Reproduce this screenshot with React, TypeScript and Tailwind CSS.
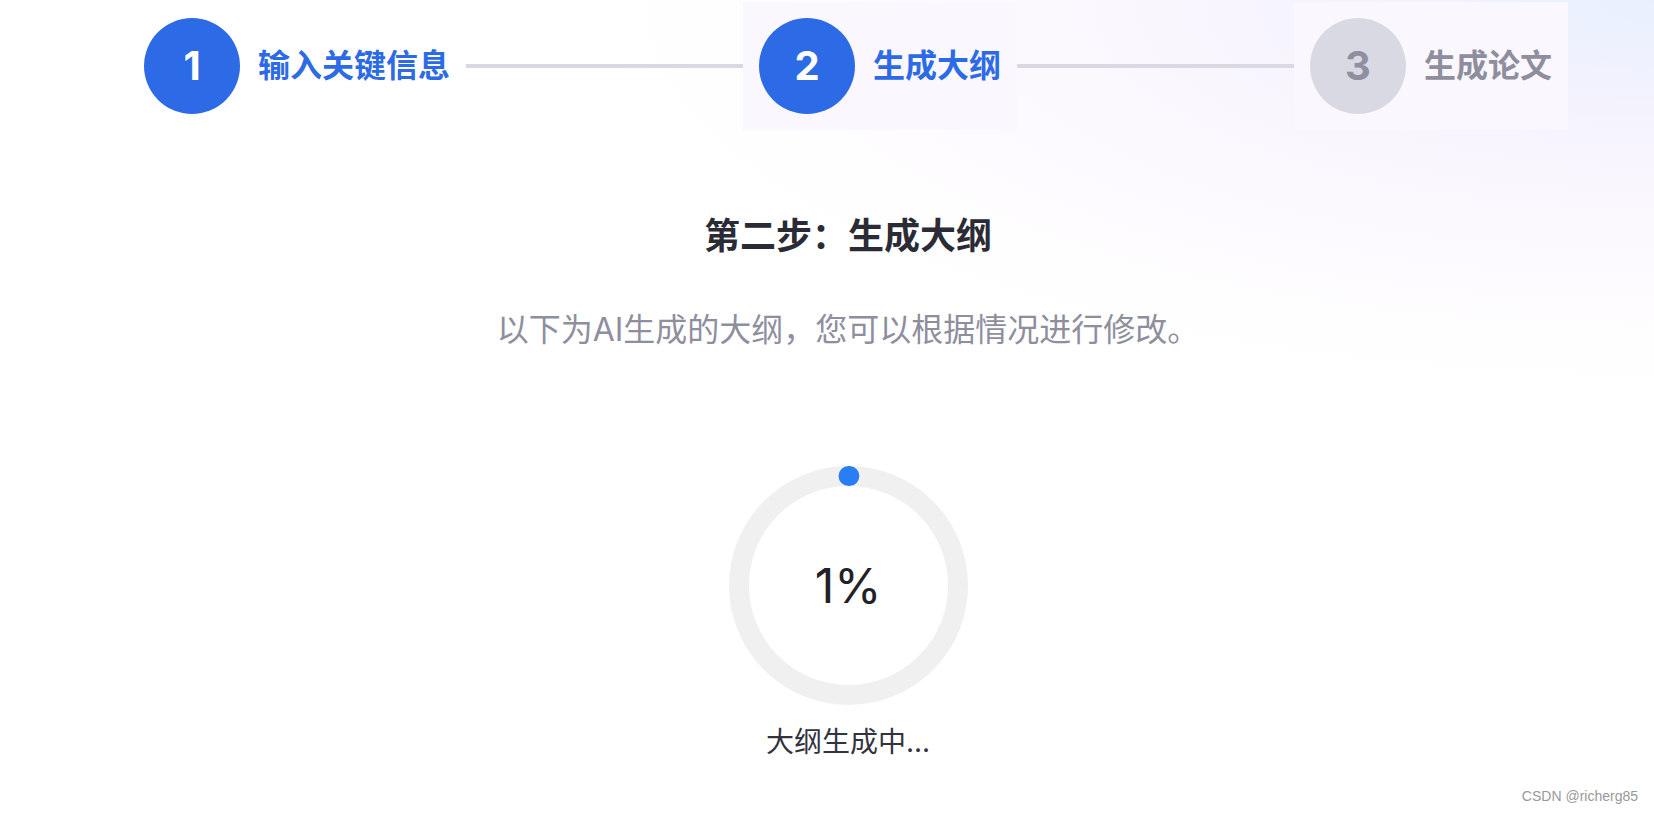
import React from 'react';

type Step = {
    no: number;
    label: string;
    state: 'done' | 'active' | 'todo';
};

const steps: Step[] = [
    { no: 1, label: '输入关键信息', state: 'done' },
    { no: 2, label: '生成大纲', state: 'active' },
    { no: 3, label: '生成论文', state: 'todo' },
];

const StepItem: React.FC<{ step: Step }> = ({ step }) => {
    const grey = step.state === 'todo';
    return (
        <div
            className={`flex items-center gap-[18px] px-4 py-4 ${
                step.state === 'done' ? 'bg-transparent' : 'bg-[#faf7fe]'
            }`}
        >
            <div
                className={`w-24 h-24 rounded-full flex items-center justify-center text-[40px] font-bold leading-none ${
                    grey ? 'bg-[#d9d9e3] text-[#8f8fa0]' : 'bg-[#2d6be6] text-white'
                }`}
            >
                {step.no}
            </div>
            <span
                className={`text-[32px] leading-[32px] font-bold whitespace-nowrap ${
                    grey ? 'text-[#8e8e9f]' : 'text-[#2d6be6]'
                }`}
            >
                {step.label}
            </span>
        </div>
    );
};

const ProgressRing: React.FC<{ percent: number }> = ({ percent }) => {
    const r = 109.5;
    const c = 2 * Math.PI * r;
    const len = Math.max((percent / 100) * c - 6, 0.5);
    return (
        <div className="relative w-[239px] h-[239px]">
            <svg width="239" height="239" viewBox="0 0 239 239" className="-rotate-90">
                <circle cx="119.5" cy="119.5" r={r} fill="none" stroke="#f0f0f0" strokeWidth="20" />
                <circle
                    cx="119.5"
                    cy="119.5"
                    r={r}
                    fill="none"
                    stroke="#2a7ef5"
                    strokeWidth="20"
                    strokeLinecap="round"
                    strokeDasharray={`${len} ${c}`}
                />
            </svg>
            <div className="absolute inset-0 flex items-center justify-center text-[48px] leading-none text-[#222226] font-['Inter','Noto_Sans_CJK_SC',sans-serif]">
                {percent}%
            </div>
        </div>
    );
};

const App: React.FC = () => {
    return (
        <div className="relative w-full h-[814px] overflow-hidden bg-[radial-gradient(ellipse_80%_60%_at_100%_0%,#e8f0fe_0%,#f5f3fd_25%,#fbf8fe_45%,#ffffff_80%)] font-['Inter','Noto_Sans_CJK_SC',sans-serif]">
            <div className="flex flex-col items-center pl-[42px]">
                {/* steps */}
                <div className="w-full flex items-center px-[86px] pt-[2px]">
                    <StepItem step={steps[0]} />
                    <div className="flex-1 h-1 bg-[#d9d8e3]" />
                    <StepItem step={steps[1]} />
                    <div className="flex-1 h-1 bg-[#d9d8e3]" />
                    <StepItem step={steps[2]} />
                </div>

                <h1 className="mt-[88px] text-[36px] leading-[36px] font-bold text-[#2b2b36]">
                    第二步：生成大纲
                </h1>
                <p className="mt-[60px] text-[32px] leading-[32px] text-[#8e8e9e]">
                    以下为AI生成的大纲，您可以根据情况进行修改。
                </p>

                <div className="mt-[120px]">
                    <ProgressRing percent={1} />
                </div>
                <p className="mt-[23px] text-[28px] leading-[28px] text-[#33333f]">大纲生成中...</p>
            </div>

            <div className="absolute right-4 bottom-[11px] text-[14px] leading-none text-[#999999] font-['Liberation_Sans',sans-serif]">
                CSDN @richerg85
            </div>
        </div>
    );
};

export default App;
